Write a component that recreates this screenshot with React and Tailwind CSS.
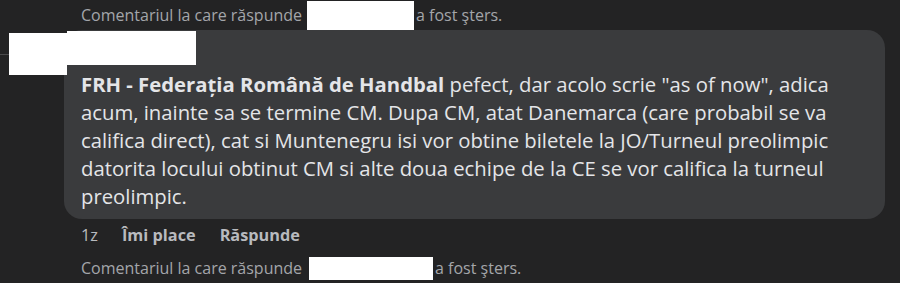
import React from 'react'

// Deleted-parent notice shown above and below a reply
function DeletedNotice({ boxClass }) {
  return (
    <div className="flex items-center h-[30px] pl-[81px] text-[16px] text-[#a4a6aa] whitespace-nowrap">
      <span>Comentariul la care răspunde</span>
      <span className={`inline-block bg-white mr-[2px] ${boxClass}`} />
      <span>a fost şters.</span>
    </div>
  )
}

export default function App() {
  return (
    <div
      className="relative w-[900px] h-[283px] overflow-hidden bg-[#232324] text-[#e4e5e8]"
      style={{ fontFamily: '"Open Sans", "Noto Sans", sans-serif' }}
    >
      <DeletedNotice boxClass="ml-[5px] w-[107px] h-[29px]" />

      {/* Comment bubble */}
      <div className="ml-[64px] w-[821px] rounded-[18px] bg-[#3a3b3d] pt-[40px] pb-[9px] px-[17px] text-[20.3px] leading-[28px] whitespace-nowrap">
        <span className="font-bold">FRH - Federația Română de Handbal</span> pefect, dar acolo scrie "as of now", adica
        <br />
        acum, inainte sa se termine CM. Dupa CM, atat Danemarca (care probabil se va
        <br />
        califica direct), cat si Muntenegru isi vor obtine biletele la JO/Turneul preolimpic
        <br />
        datorita locului obtinut CM si alte doua echipe de la CE se vor califica la turneul
        <br />
        preolimpic.
      </div>

      {/* Actions */}
      <div className="flex items-center h-[32px] pl-[81px] gap-[24px] text-[16.3px] text-[#b8babe]">
        <span>1z</span>
        <span className="font-bold">Îmi place</span>
        <span className="font-bold">Răspunde</span>
      </div>

      <div className="pt-[2px]">
        <DeletedNotice boxClass="ml-[7px] w-[124px] h-[23px]" />
      </div>

      {/* Redacted author name */}
      <div className="absolute left-0 top-[54px] w-[9px] h-px bg-[#4a4a4c]" />
      <div className="absolute left-[9px] top-[33px] w-[58px] h-[42px] bg-white" />
      <div className="absolute left-[67px] top-[31px] w-[129px] h-[34px] bg-white" />
    </div>
  )
}
